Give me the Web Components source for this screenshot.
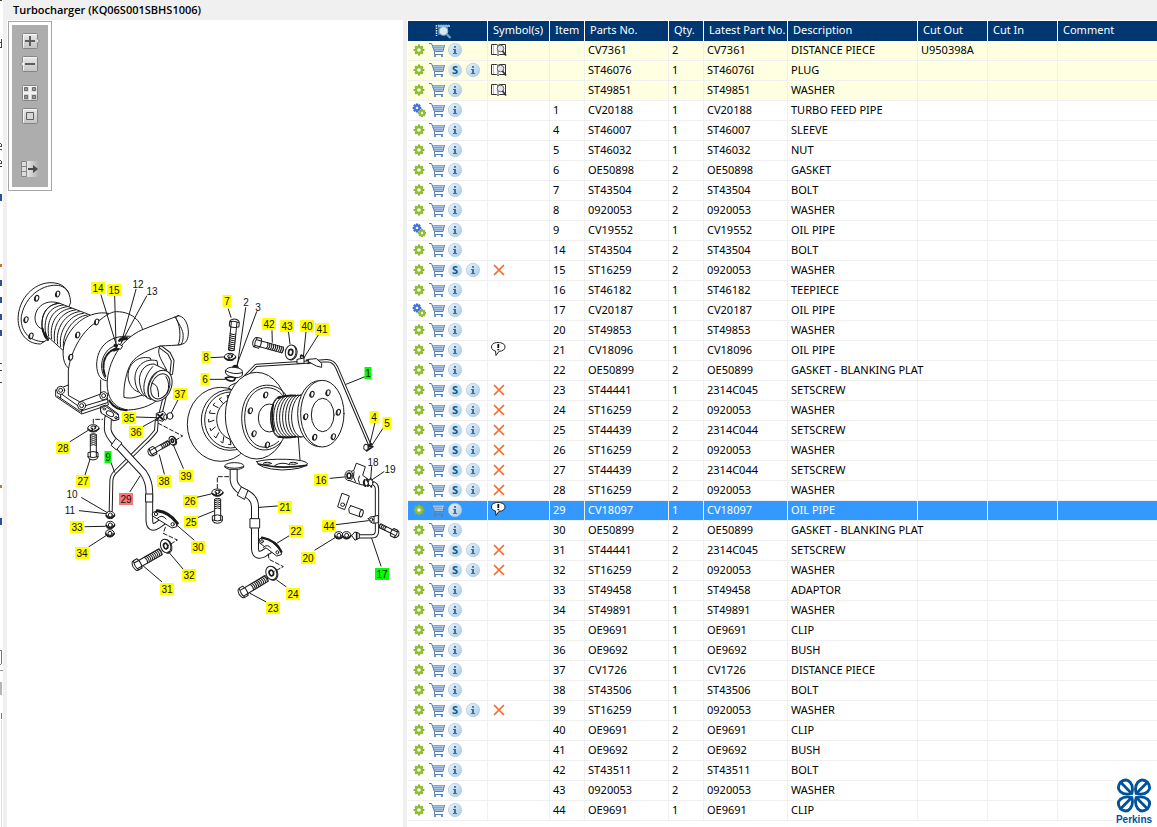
<!DOCTYPE html>
<html lang="en">
<head>
<meta charset="utf-8">
<title>Turbocharger</title>
<style>
html,body{margin:0;height:100%}
body{font:11px/16px "Noto Sans","Open Sans",sans-serif;color:#000;background:#fff;overflow:hidden}
</style>
</head>
<body>
<parts-app></parts-app>
<script>
/* ---------- Application frame ---------- */
class PartsApp extends HTMLElement{
  connectedCallback(){
    this.attachShadow({mode:'open'}).innerHTML=`
<style>
:host{display:grid;grid-template-columns:3px 4px minmax(0,1fr);height:100vh;background:#fff}
.sash{background:#f0f0f0}
main{display:grid;grid-template-rows:20px minmax(0,1fr);min-width:0}
h1{margin:0;padding-left:6px;background:#f0f0f0;font:600 11px/20px "Open Sans","Noto Sans",sans-serif;white-space:nowrap}
.split{display:grid;grid-template-columns:minmax(0,396fr) 4px minmax(0,750fr);min-height:0}
.view,.list{position:relative;min-width:0;overflow:hidden}
.list{padding:1px 0 0 1px}
tool-strip{position:absolute;left:1px;top:1px}
brand-mark{position:absolute;right:0;bottom:0}
</style>
<side-sliver></side-sliver><div class="sash"></div>
<main>
<h1>Turbocharger (KQ06S001SBHS1006)</h1>
<div class="split">
<section class="view"><turbo-drawing></turbo-drawing><tool-strip></tool-strip></section>
<div class="sash"></div>
<section class="list"><parts-table></parts-table><brand-mark></brand-mark></section>
</div>
</main>`;
  }
}

/* ---------- Visible edge of the collapsed side pane ---------- */
class SideSliver extends HTMLElement{
  connectedCallback(){
    this.attachShadow({mode:'open'}).innerHTML=`
<style>:host{display:block;overflow:hidden}svg{display:block}</style>
<svg width="3" height="827" viewBox="0 0 3 827" shape-rendering="crispEdges">
<g fill="#444"><path d="M0 0h2v1H0zM1 39h1v9H1zM0 42h1v1H0zM0 47h1v1H0zM0 143h1v1H0zM1 144h1v3H0v-1h1zM0 149h2v1H0zM0 160h1v1H0zM1 161h1v3H0v-1h1zM0 166h2v1H0zM0 363h2v1H0zM0 370h2v1H0zM0 382h2v1H0z"/></g>
<g fill="#2c4c9c"><path d="M0 194h2v7H0zM0 280h2v6H0zM0 297h2v6H0zM0 314h2v6H0zM0 330h2v6H0zM0 518h2v7H0z"/></g>
<g fill="#d0702c"><path d="M0 264h2v3H0zM0 485h2v3H0z"/></g>
<path d="M1 650v14M0 650h1M0 664h1M1 713v6" stroke="#777" fill="none"/>
<path d="M0 670h3" stroke="#999"/><path d="M0 682h2v13H0z" fill="#b5b5b5"/>
<path d="M1.500 720v107" stroke="#dde0ea"/>
</svg>`;
  }
}

/* ---------- Zoom / layout buttons over the drawing ---------- */
class ToolStrip extends HTMLElement{
  connectedCallback(){
    const box='<rect x="2.500" y="1.500" width="15" height="15" rx="1" fill="url(#face)" stroke="#858585"/><path d="M3.500 15.500v-13h13" fill="none" stroke="#f6f6f6"/>';
    const b=(label,art)=>`<button aria-label="${label}"><svg width="20" height="18" viewBox="0 0 20 18"><defs><linearGradient id="face" x2="0" y2="1"><stop stop-color="#e9e9e9"/><stop offset="1" stop-color="#c4c4c4"/></linearGradient><linearGradient id="fade"><stop stop-color="#e6e6e6"/><stop offset="1" stop-color="#adadad"/></linearGradient></defs>${art}</svg></button>`;
    this.attachShadow({mode:'open'}).innerHTML=`
<style>
:host{display:block;border:1px solid #a6a6a6;background:#fff;padding:3px}
div{display:flex;flex-direction:column;align-items:center;width:36px;height:162px;box-sizing:border-box;padding-top:7px;background:#adadad;gap:5px}
button{border:0;background:none;padding:0;width:20px;height:18px}
svg{display:block}
button:nth-child(3){margin-top:6px}
button:nth-child(5){margin-top:30px}
</style>
<div role="toolbar" aria-label="View">
${b('Zoom in',box+'<path d="M17 6.500l2.500 2.500-2.500 2.500" fill="#ddd" stroke="#858585"/><path d="M10 4v10M5 9h10" stroke="#5e5e5e" stroke-width="2"/>')}
${b('Zoom out',box+'<path d="M3 6.500L.5 9 3 11.500" fill="#ddd" stroke="#858585"/><path d="M5 9h10" stroke="#5e5e5e" stroke-width="2"/>')}
${b('Fit',box+'<path d="M10 2v14M3 9h14" stroke="#f2f2f2" stroke-width="2"/><g fill="#999" stroke="#6a6a6a"><path d="M4.500 3.500h3v3h-3zM12.500 3.500h3v3h-3zM4.500 11.500h3v3h-3zM12.500 11.500h3v3h-3z"/></g>')}
${b('Full size',box+'<path d="M6.500 5.500h7v7h-7z" fill="#d6d6d6" stroke="#5e5e5e"/>')}
${b('Hide panel','<path d="M7 1h12v16H7z" fill="url(#fade)"/><g fill="#ddd" stroke="#858585"><path d="M1.500 1.500h5v5h-5zM1.500 6.500h5v5h-5zM1.500 11.500h5v5h-5z"/></g><path d="M8 9h6" stroke="#4a4a4a" stroke-width="2"/><path d="M13 5l5 4-5 4z" fill="#4a4a4a"/>')}
</div>`;
  }
}

/* ---------- Exploded view ---------- */
class TurboDrawing extends HTMLElement{
  connectedCallback(){
    const line=(...n)=>{let d='';for(let i=0;i<n.length;i+=4)d+=`M${n[i]} ${n[i+1]}L${n[i+2]} ${n[i+3]}`;return `<path d="${d}"/>`};
    const ell=(x,y,rx,ry,rot=0,c='')=>`<ellipse cx="${x}" cy="${y}" rx="${rx}" ry="${ry}" transform="rotate(${rot} ${x} ${y})" ${c}/>`;
    const hole=(x,y)=>ell(x,y,6,9,20)+`<path stroke-width="4" d="M${x-4} ${y-4}q-2 6 1 11"/>`;
    const pipe=(d,w)=>`<path class="n" d="${d}" stroke-width="${w}"/><path class="n" d="${d}" stroke="#fff" stroke-width="${w-6}"/>`;
    /* hex bolt: head centre, shaft end, shaft width */
    const bolt=(x,y,x2,y2,w)=>{
      const len=Math.hypot(x2-x,y2-y),a=Math.atan2(y2-y,x2-x)*180/Math.PI,h=w/2;
      let t='';for(let i=30;i<len;i+=6)t+=`M${i} ${-h}q5 ${h} 0 ${w}`;
      return `<g transform="translate(${x} ${y}) rotate(${a})"><path d="M10 ${-h}H${len}q4 ${h} 0 ${w}H10z"/><path stroke-width="3" d="${t}"/><path d="M-12 ${-h-1}q3 -6 8 -6H8q7 ${h+6} 0 ${w+12}H-4q-6 0 -8 -6q-4 ${-h} 0 ${-w}zM-4 ${-h}H10M-4 ${h}H10M-4 ${-h-7}q-6 ${h+7} 0 ${w+12}"/></g>`};
    const spring=(x,y)=>ell(x,y,17,11)+ell(x,y-2,7,5)+`<path class="n" stroke-width="4" d="M${x-16} ${y+2}q15 14 32 0M${x-3} ${y}v9M${x+5} ${y}l3 -7"/>`;
    const washer=(x,y,rx,ry,r)=>ell(x+3,y+1,rx,ry,r)+ell(x,y,rx,ry,r)+ell(x,y,rx*.4,ry*.4,r,'stroke-width="5"');
    const nut=(x,y)=>ell(x,y,13,11)+`<path class="n" stroke-width="5" d="M${x-12} ${y+2}q12 14 24 0"/>`+ell(x,y,6,6);
    let bellA='';for(let i=0;i<8;i++){const x=178+12*i,y=100+5*i,u=128+9*i,v=182+8*i;bellA+=`M${x} ${y}C${x-42} ${y+4} ${u-8} ${v-46} ${u} ${v}`}
    let bellB='';for(let i=0;i<8;i++){const x=300+9*i;bellB+=`M${x} ${350-i}C${x-38} ${365} ${x-38} ${460} ${x} ${472}`}
    let vanes='';for(let i=0;i<9;i++){const t=(95+i*21)*Math.PI/180,c=Math.cos(t),s=Math.sin(t);vanes+=`M${154+52*c} ${420+56*s}l${16*c+5*s} ${18*s-5*c}l${-7*s} ${8*c}`}
    const Y='#ff0',G='#0f0',R='#f87878';
    const tags=[[14,98,288,Y],[15,114,290,Y],[12,138,284],[13,152,291],[7,227,301,Y],[2,246,302],[3,258,307],[8,206,357,Y],[6,205,379,Y],[42,269,324,Y],[43,287,326,Y],[40,307,326,Y],[41,322,329,Y],[1,368,373,G],[4,374,417,Y],[5,387,423,Y],[37,180,394,Y],[35,129,418,Y],[36,136,432,Y],[28,63,448,Y],[9,108,457,G],[27,83,481,Y],[39,186,476,Y],[38,164,481,Y],[10,72,494],[11,70,510],[29,126,499,R],[33,77,527,Y],[34,82,553,Y],[30,198,547,Y],[32,189,575,Y],[31,167,589,Y],[26,190,501,Y],[25,191,522,Y],[21,285,507,Y],[22,296,531,Y],[16,321,480,Y],[18,373,462],[19,390,469],[44,329,526,Y],[20,308,558,Y],[17,382,574,G],[24,293,594,Y],[23,273,608,Y]];
    const labels=tags.map(([n,x,y,c])=>{const w=n>9?14:c===G?7:9;return (c?`<rect x="${x-w/2}" y="${y-6}" width="${w}" height="12" fill="${c}"/>`:'')+`<text x="${x}" y="${y+4}">${n}</text>`}).join('');
    this.attachShadow({mode:'open'}).innerHTML=`
<style>
:host{display:block}
svg{display:block;width:100%;height:auto}
.art{fill:#fff;stroke:#1a1a1a;stroke-width:3;stroke-linejoin:round;stroke-linecap:round}
.n{fill:none}
.dash{fill:none;stroke-dasharray:12 7}
text{font:10px "Liberation Sans",Arial,sans-serif;text-anchor:middle;fill:#111}
</style>
<svg viewBox="7 20 396 807" role="img" aria-label="Turbocharger exploded view">
<g class="art" transform="translate(0 270) scale(.33333)">
<path d="M120 222C75 222 50 180 55 135C60 85 100 40 150 38C185 37 210 55 212 98L170 190Z"/>
<path class="n" d="M132 215C82 215 60 175 64 140C72 90 112 50 160 46C182 44 198 52 207 70"/>
${hole(110,85)}${hole(173,72)}${hole(78,149)}${hole(93,198)}
<path d="M178 100C140 85 105 110 105 145C106 165 118 175 130 178L180 190Z"/>
<path d="M178 100C140 100 118 140 128 186L190 242L270 136Z"/><path class="n" d="${bellA}"/>
<path class="n" stroke-width="6" d="M128 176q4 20 10 28M136 190q3 14 8 20"/>
<path d="M325 130C270 120 215 160 195 215C183 250 190 290 212 298L300 250Z"/>
<path d="M168 360L205 345L320 370L325 405L245 432L168 380Z"/>
<path d="M205 375V300C213 240 250 175 300 150C330 125 345 125 350 125C400 125 430 160 430 195L325 372L302 372L240 395Z"/>
<path class="n" d="M168 360L240 412L320 388M172 378L240 424L322 398"/>
${hole(233,195)}${hole(290,156)}${hole(212,262)}
${ell(182,361,12,12)}${ell(182,361,6,6)}${ell(245,407,12,12)}${ell(245,407,6,6)}${ell(311,377,12,12)}${ell(311,377,6,6)}
<path class="n" d="M182 374v10M245 419v10M302 372V330"/>
<path d="M400 200C330 190 290 230 290 285C291 315 302 330 320 332L400 300Z"/>
<path class="n" stroke-width="6" stroke-dasharray="14 5" d="M345 238C315 245 302 285 316 318"/>
<path class="n" d="M355 225C310 230 290 290 316 325M360 205q20 -10 30 4M366 212q14 -8 24 2"/>
<path class="n" stroke-width="8" d="M358 212q10 -10 22 -5"/>
${pipe('M478 228L507 250L518 272L514 310',11)}
${pipe('M494 380L482 430',12)}
<path d="M535 137L425 180C370 205 330 260 322 330C318 380 340 415 385 420C430 418 470 400 485 375L500 300C480 262 470 250 480 228C500 226 530 228 548 222C575 215 570 140 535 137Z"/>
<path class="n" d="M535 137C515 142 543 160 549 190C551 210 546 224 540 226M525 141C540 155 545 205 534 226M480 228C430 245 400 262 388 290C375 320 370 360 372 382C395 388 410 380 425 376"/>
<path d="M450 264C410 255 384 285 384 318C386 345 400 360 415 366L470 330Z"/>
<path d="M470 272C430 262 402 295 405 330C407 355 418 370 430 378L480 340Z"/>
<path d="M498 300L462 282C430 280 412 315 420 345C424 368 434 384 452 388Z"/>
${ell(480,347,34,48,22)}${ell(481,349,27,39,22)}
<path class="n" d="M452 388C436 375 444 330 470 308M440 381C424 365 430 318 458 290M456 340q20 0 20 40M498 320q14 20 4 50"/>
<path class="n" stroke-width="6" d="M328 392C340 412 355 420 380 421"/>
<path d="M302 410L318 405L355 432L355 448L340 452L304 428Z"/>${ell(330,428,10,6,30)}${ell(312,416,4,3)}${ell(346,441,4,3)}
<path d="M470 430l20 -6l12 14l-14 16l-18 -6z"/><path class="n" stroke-width="6" d="M474 434l14 14M472 446l16 -14"/>${ell(510,438,9,10)}${ell(496,442,5,8)}
<path class="n" stroke-width="9" d="M345 226l10 8M342 240l12 -4"/><path d="M356 222l12 6l-6 10l-12 -4z"/>
${line(303,75,350,228,344,77,348,225,408,58,365,215,440,78,362,222,535,388,514,428)}
</g>
<g class="art" transform="translate(180 280) scale(.33333)">
${ell(122,433,100,111)}${ell(150,420,86,91)}${ell(152,420,78,84)}
<path class="n" d="${vanes}"/>${ell(172,418,62,64)}
<path class="n" d="M150 330q-10 -10 6 -16q16 -6 24 -12"/>
${pipe('M195 290L228 256L360 248L440 242Q460 242 470 262L568 492',10)}
${ell(230,407,94,130)}
<path class="n" d="M318 345C280 290 185 310 185 415C187 510 260 535 305 485"/><path class="n" d="M312 352C280 300 194 315 194 415C196 500 255 522 296 484"/>
${hole(257,345)}${hole(211,392)}${hole(222,461)}${hole(262,495)}
<path d="M355 470L360 545H305V500Z" stroke="none"/><path class="n" d="M355 472L360 540"/>
${ell(268,414,33,42)}
<path d="M295 350C265 365 265 460 295 472L380 470V346Z"/><path class="n" d="${bellB}"/><path class="n" stroke-width="5" d="M296 355q22 -12 50 -8M296 470q24 6 50 0M280 372q-8 40 2 80"/>
${ell(419,401,66,99)}${ell(427,401,65,100)}${ell(428,405,34,50)}
${hole(396,343)}${hole(444,338)}${hole(377,410)}${hole(475,397)}${hole(404,472)}${hole(460,470)}
<path d="M230 545Q260 536 320 538Q380 540 383 552Q370 568 305 570Q235 566 230 545Z"/><path class="n" stroke-width="5" d="M235 552Q300 568 380 556"/>${ell(262,550,12,3)}${ell(340,550,12,3)}<path class="n" d="M285 556q20 -12 44 -2"/>
${bolt(162,131,154,210,17)}${spring(150,231)}
<path stroke-width="5" d="M158 262q6 -10 16 0z"/><path d="M137 270q6 -10 28 -8q22 4 22 12v12q-10 10 -28 6q-20 -4 -22 -12z"/><path class="n" d="M137 272q22 14 50 6"/>
<path stroke-width="5" d="M136 294q14 -6 30 0q-2 8 -8 9q-16 0 -22 -9z"/>
${bolt(232,189,308,210,18)}${washer(332,217,16,22,10)}
<path d="M352 238l20 -4v16h-20z"/><path class="n" stroke-width="5" d="M362 232q0 -14 10 0M380 240l24 6M384 250l20 -8"/><path d="M385 238l24 -2l16 14v12l-16 -4l-22 -12z"/>
<path class="n" stroke-width="6" d="M556 494l22 6M554 506l20 -14M560 512l14 -10"/>${ell(558,502,7,9)}
${line(145,87,153,112,197,83,172,258,230,95,168,262,92,233,133,231,90,298,135,298,276,152,277,187,325,152,330,192,378,155,370,232,415,165,372,233,555,290,498,313,585,428,570,490,612,440,575,497)}
</g>
<g class="art" transform="translate(50 400) scale(.33333)">
${pipe('M320 65L318 92Q300 115 285 128L195 217Q184 228 184 245L182 340',12)}
${pipe('M174 56L173 88Q174 105 200 132L280 218Q298 245 298 275L298 362Q300 390 322 376L345 360',23)}
<path d="M184 135l14 -20l18 14l-16 20zM288 282h20v24h-20z"/>
<path d="M152 25L165 18L205 45L207 58L192 62L155 40Z"/>${ell(180,41,12,7,30)}${ell(163,27,4,3)}${ell(198,53,4,3)}
<path d="M308 338q14 -10 34 0l38 28v14l-14 4l-58 -36z"/><path class="n" stroke-width="9" d="M322 332q36 4 60 38"/>${ell(318,342,5,5)}${ell(368,373,5,5)}<path d="M322 355q14 -14 26 2"/>
${nut(181,345)}${nut(181,375)}${nut(180,400)}
${spring(130,85)}${bolt(130,166,130,103,18)}
${bolt(308,155,356,128,13)}${washer(367,122,9,13,-20)}
${washer(347,438,15,21,-20)}${bolt(262,495,332,455,20)}
${spring(502,278)}${bolt(503,356,503,297,18)}
<path class="dash" d="M130 70V58H158M325 70L398 108L374 122M346 382L340 400L382 420L352 438M502 265V230H540"/>
${line(60,125,113,92,105,225,120,178,183,188,194,217,240,275,270,228,95,293,172,338,88,332,168,341,105,380,165,379,117,440,168,407,432,420,380,375,400,508,355,455,335,545,280,498,343,222,328,165,400,205,370,135,257,51,318,53,275,82,318,58,440,292,483,282,445,352,492,333)}
</g>
<g class="art" transform="translate(200 440) scale(.33333)">
${pipe('M101 84V120Q103 142 130 157Q165 170 165 200L165 325Q166 352 190 341L210 328',24)}
<path d="M112 165l12 -24l20 10l-10 26zM151 236h28v28h-28z"/>
<path d="M75 76q6 -8 28 -8q24 0 28 8v6q-12 6 -16 6H88q-8 -2 -13 -6z"/><path class="n" d="M76 80q26 10 54 0"/>
<path d="M180 296q16 -6 34 6l30 32v10l-14 4l-52 -40z"/><path class="n" stroke-width="7" d="M186 293q42 8 58 42"/>${ell(186,304,4,5)}${ell(232,337,4,5)}<path d="M190 322q14 -12 22 2"/>
${washer(214,399,16,21,-20)}${bolt(130,457,200,415,20)}
${pipe('M512 128Q531 130 531 148V272Q531 289 515 289H472',13)}
<path d="M470 70l26 10l-8 26l22 16l-8 16l-26 -6l-32 -12l-4 -22l20 -6z"/>${ell(447,107,12,15)}${ell(447,107,6,8,0,'stroke-width="5"')}<path class="n" d="M462 95q-6 16 4 30M478 108q-6 10 0 22"/><path class="n" stroke-width="6" d="M500 118l14 22M512 116l-8 22M494 120q-6 10 2 18"/>${ell(512,128,7,10)}
<path d="M427 160l21 8l-14 41l-20 -8z"/>${ell(428,194,6,5)}
<path d="M452 197l34 12q6 12 -4 22l-34 -12q-6 -14 4 -22z"/>${ell(484,220,5,11,15)}
<path d="M505 236q6 -8 14 -6l16 -4v22l-16 2q-10 -2 -14 -14z"/>${ell(514,239,5,5)}<path class="n" d="M522 230v18"/>
${bolt(584,279,540,257,12)}
${nut(417,286)}${nut(440,286)}<path d="M456 286l8 -10l14 4v14l-12 6z"/><path class="n" stroke-width="5" d="M470 278v20"/>
<path class="dash" d="M205 342L207 358L250 380L220 396"/>
${line(232,198,178,202,268,287,230,310,258,440,230,420,197,485,150,460,390,115,433,111,515,80,512,118,552,95,515,120,408,254,505,242,345,330,405,293,543,378,515,295)}
</g>
${labels}
</svg>`;
  }
}

/* ---------- Parts list ---------- */
const OPEN='book',CROSS='cross',NOTE='note';
/* linked assembly, superseded, symbol, item, part, qty, latest part, description, cut out */
const PARTS=[
[0,0,OPEN,'','CV7361',2,'CV7361','DISTANCE PIECE','U950398A'],
[0,1,OPEN,'','ST46076',1,'ST46076I','PLUG'],
[0,0,OPEN,'','ST49851',1,'ST49851','WASHER'],
[1,0,'',1,'CV20188',1,'CV20188','TURBO FEED PIPE'],
[0,0,'',4,'ST46007',1,'ST46007','SLEEVE'],
[0,0,'',5,'ST46032',1,'ST46032','NUT'],
[0,0,'',6,'OE50898',2,'OE50898','GASKET'],
[0,0,'',7,'ST43504',2,'ST43504','BOLT'],
[0,0,'',8,'0920053',2,'0920053','WASHER'],
[1,0,'',9,'CV19552',1,'CV19552','OIL PIPE'],
[0,0,'',14,'ST43504',2,'ST43504','BOLT'],
[0,1,CROSS,15,'ST16259',2,'0920053','WASHER'],
[0,0,'',16,'ST46182',1,'ST46182','TEEPIECE'],
[1,0,'',17,'CV20187',1,'CV20187','OIL PIPE'],
[0,0,'',20,'ST49853',1,'ST49853','WASHER'],
[0,0,NOTE,21,'CV18096',1,'CV18096','OIL PIPE'],
[0,0,'',22,'OE50899',2,'OE50899','GASKET - BLANKING PLAT'],
[0,1,CROSS,23,'ST44441',1,'2314C045','SETSCREW'],
[0,1,CROSS,24,'ST16259',2,'0920053','WASHER'],
[0,1,CROSS,25,'ST44439',2,'2314C044','SETSCREW'],
[0,1,CROSS,26,'ST16259',2,'0920053','WASHER'],
[0,1,CROSS,27,'ST44439',2,'2314C044','SETSCREW'],
[0,1,CROSS,28,'ST16259',2,'0920053','WASHER'],
[0,0,NOTE,29,'CV18097',1,'CV18097','OIL PIPE'],
[0,0,'',30,'OE50899',2,'OE50899','GASKET - BLANKING PLAT'],
[0,1,CROSS,31,'ST44441',2,'2314C045','SETSCREW'],
[0,1,CROSS,32,'ST16259',2,'0920053','WASHER'],
[0,0,'',33,'ST49458',1,'ST49458','ADAPTOR'],
[0,0,'',34,'ST49891',1,'ST49891','WASHER'],
[0,0,'',35,'OE9691',1,'OE9691','CLIP'],
[0,0,'',36,'OE9692',1,'OE9692','BUSH'],
[0,0,'',37,'CV1726',1,'CV1726','DISTANCE PIECE'],
[0,0,'',38,'ST43506',1,'ST43506','BOLT'],
[0,1,CROSS,39,'ST16259',1,'0920053','WASHER'],
[0,0,'',40,'OE9691',2,'OE9691','CLIP'],
[0,0,'',41,'OE9692',2,'OE9692','BUSH'],
[0,0,'',42,'ST43511',2,'ST43511','BOLT'],
[0,0,'',43,'0920053',2,'0920053','WASHER'],
[0,0,'',44,'OE9691',1,'OE9691','CLIP']];

class PartsTable extends HTMLElement{
  connectedCallback(){
    const icon=id=>`<svg width="18" height="18"><use href="#${id}"/></svg>`;
    const act=(id,label)=>`<button aria-label="${label}">${icon(id)}</button>`;
    const rows=PARTS.map(([gears,s,sym,...cells])=>{
      while(cells.length<8)cells.push('');
      const cls=sym===OPEN?'open':cells[0]===29?'sel':'';
      return `<tr class="${cls}"><td class="acts"><div>${act(gears?'gears':'gear','Options')}${act('cart','Add to cart')}${s?'<button class="s"><span>S</span></button>':''}${act('info','Details')}</div></td><td class="sym">${sym?icon(sym):''}</td>${cells.map(c=>`<td>${c}</td>`).join('')}</tr>`}).join('');
    const tooth=(cx,cy,r,k)=>{let d='';for(let i=0;i<8;i++){const a=i*Math.PI/4;d+=`M${cx} ${cy}L${(cx+r*Math.cos(a)).toFixed(2)} ${(cy+r*Math.sin(a)).toFixed(2)}`}return `<path d="${d}" stroke="${k}" stroke-width="2.200"/>`};
    this.attachShadow({mode:'open'}).innerHTML=`
<style>
:host{display:block}
table{width:100%;table-layout:fixed;border-collapse:separate;border-spacing:0}
th,td{box-sizing:border-box;height:20px;padding:0 0 0 3px;line-height:18px;vertical-align:top;text-align:left;font-weight:400;white-space:nowrap}
td{line-height:17px}
th{padding-left:5px;background:#003770;color:#fff;border-right:1px solid #fff}
td{border-right:1px solid #f0f0f0;border-bottom:1px solid #f0f0f0}
th:last-child,td:last-child{border-right:0}
.open td{background:#ffffe1}
.sel td{background:#39f;color:#fff}
td.acts,td.sym{padding-left:2px}
.acts div{display:flex}
button{width:18px;height:18px;padding:0;border:0;background:none;flex:none}
svg{display:block;margin:auto}
.sym svg{margin:0}
th.look{padding:1px 10px 0 0}
.s{display:grid;place-items:center}
.s span{width:14px;height:14px;border-radius:7px;background:linear-gradient(135deg,#e8f1f8,#a8cbe4);font:700 11px/14px "Noto Sans",sans-serif;color:#005c94;text-align:center}
.defs{position:absolute;width:0;height:0}
.c1{width:80px}.c2{width:62px}.c3{width:35px}.c4{width:84px}.c5{width:130px}.c6{width:70px}
</style>
<svg class="defs" aria-hidden="true">
<linearGradient id="disc" x2="1" y2="1"><stop stop-color="#edf4fa"/><stop offset="1" stop-color="#a4c9e4"/></linearGradient>
<symbol id="gear" viewBox="0 0 18 18">${tooth(9,9,5.4,'#86b42c')}<circle cx="9" cy="9" r="3" fill="none" stroke="#8fbf35" stroke-width="2.400"/><circle cx="9" cy="9" r="1.800" fill="#fff"/></symbol>
<symbol id="gears" viewBox="0 0 18 18">${tooth(7,7,4.4,'#3467d6')}<circle cx="7" cy="7" r="2.400" fill="none" stroke="#4277e0" stroke-width="2"/><circle cx="7" cy="7" r="1.300" fill="#fff"/>${tooth(12,12,4,'#86b42c')}<circle cx="12" cy="12" r="2.200" fill="none" stroke="#8fbf35" stroke-width="2"/><circle cx="12" cy="12" r="1.200" fill="#fff"/></symbol>
<symbol id="cart" viewBox="0 0 18 18"><path d="M4 4h13l-2 6H6z" fill="#c3d6ec"/><path d="M4 4.500h12.500M5 6.500h11M6 8.500h10M7 4v6M9 4v6M11 4v6M13 4v6" fill="none" stroke="#7d9fcb" stroke-width=".8"/><path d="M1 2.500h2.500L6.500 10.500H15L16.500 4M6.500 10.500v3H15" fill="none" stroke="#5480b6"/><circle cx="7" cy="15" r="1.100" fill="#5480b6"/><circle cx="14" cy="15" r="1.100" fill="#5480b6"/></symbol>
<symbol id="info" viewBox="0 0 18 18"><circle cx="9" cy="9" r="6.700" fill="url(#disc)" stroke="#a9c8e1" stroke-width=".7"/><path d="M8 5h2v1.800H8zM7 8h3v4h1v1H7v-1h1V9H7z" fill="#3f6fa8"/></symbol>
<symbol id="book" viewBox="0 0 18 18"><path d="M1.500 3.500h5l1.500 1 1.500-1h6v10h-6l-1.500 1-1.500-1h-5z" fill="#fff" stroke="#333"/><path d="M8 4.500v9" stroke="#555"/><path d="M3.500 4v9" stroke="#bbb"/><circle cx="10.500" cy="7.500" r="3.300" fill="#e4e4e4" stroke="#666"/><path d="M12.500 10l3.500 4.500" stroke="#333" stroke-width="1.700"/></symbol>
<symbol id="cross" viewBox="0 0 18 18"><path d="M4 4l10 10M14 4L4 14" stroke="#f4682a" stroke-width="1.700"/></symbol>
<symbol id="note" viewBox="0 0 18 18"><path d="M8 1.500C3.500 1.500 1.500 3.500 1.500 6s2 3.500 4 4l.5 4.500L9 10.300c4 0 6-2 6-4.300 0-3-3-4.500-7-4.500z" fill="#fff" stroke="#222"/><path d="M8.300 3v4M8.300 8v1.300" stroke="#111" stroke-width="1.800"/></symbol>
<symbol id="look" viewBox="0 0 18 18"><path d="M2.500 3v11M4 3.500h11" stroke="#e8f4ff" stroke-dasharray="1.500 1" stroke-width="1.500"/><path d="M4 3h12v2H4z" fill="#78bfe8"/><path d="M4 5h10v8H4z" fill="#3b7dac"/><circle cx="9.500" cy="9" r="4.300" fill="#dce6ee" stroke="#8fb4cf"/><path d="M12.500 12l4 4" stroke="#6f9fc5" stroke-width="2.400"/></symbol>
</svg>
<table>
<colgroup><col class="c1"><col class="c2"><col class="c3"><col class="c4"><col class="c3"><col class="c4"><col class="c5"><col class="c6"><col class="c6"><col></colgroup>
<thead><tr><th class="look" aria-label="Search"><svg width="18" height="18"><use href="#look"/></svg></th><th>Symbol(s)</th><th>Item</th><th>Parts No.</th><th>Qty.</th><th>Latest Part No.</th><th>Description</th><th>Cut Out</th><th>Cut In</th><th>Comment</th></tr></thead>
<tbody>${rows}</tbody>
</table>`;
  }
}

/* ---------- Brand mark ---------- */
class BrandMark extends HTMLElement{
  connectedCallback(){
    const loop=(x,y,r)=>`<g transform="translate(${x} ${y}) rotate(${r})"><path d="M0 -7.500C10 -6 8 4 0 8.500C-8 4 -10 -6 0 -7.500zM0 -7V8"/></g>`;
    this.attachShadow({mode:'open'}).innerHTML=`
<style>
:host{display:block;box-sizing:border-box;width:43px;height:52px;padding:3px 3px 0 0;background:#fff;color:#00529b;text-align:center;overflow:hidden}
svg{display:block;margin:0 auto}
b{display:block;font:700 10px/14px "Liberation Sans",Arial,sans-serif}
</style>
<svg width="36" height="35" viewBox="0 0 36 35" fill="none" stroke="#00529b" stroke-width="2.800">
${loop(9.800,9.500,-45)}${loop(26.200,9.500,45)}${loop(9.800,25.500,-135)}${loop(26.200,25.500,135)}
</svg>
<b>Perkins</b>`;
  }
}
for(const [n,c] of Object.entries({'side-sliver':SideSliver,'tool-strip':ToolStrip,'turbo-drawing':TurboDrawing,'parts-table':PartsTable,'brand-mark':BrandMark,'parts-app':PartsApp}))customElements.define(n,c);
</script>
</body>
</html>
